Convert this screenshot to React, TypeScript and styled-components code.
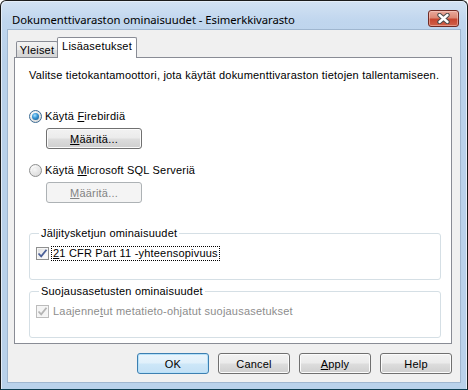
import React from 'react'
import styled, { createGlobalStyle, css } from 'styled-components'

const UI_FONT = `'Liberation Sans', Arial, sans-serif`
const TITLE_FONT = `'Noto Sans', 'Liberation Sans', sans-serif`

const GlobalStyle = createGlobalStyle`
  html, body {
    margin: 0;
    padding: 0;
    background: #ffffff;
  }
  * {
    box-sizing: border-box;
  }
`

export default function App() {
  return (
    <>
      <GlobalStyle />
      <Window>
        <TitleBar>
          <Title>Dokumenttivaraston ominaisuudet - Esimerkkivarasto</Title>
          <CloseButton>
            <svg width='13' height='11' viewBox='0 0 13 11'>
              <path d='M2.5 2 L10.5 9 M10.5 2 L2.5 9' stroke='#4b4b4b' strokeWidth='4.4' strokeLinecap='round' />
              <path d='M2.5 2 L10.5 9 M10.5 2 L2.5 9' stroke='#ffffff' strokeWidth='2.4' strokeLinecap='round' />
            </svg>
          </CloseButton>
        </TitleBar>
        <Client>
          <TabStrip>
            <Tab $width={42}>Yleiset</Tab>
            <Tab $width={80} $active>
              Lisäasetukset
            </Tab>
          </TabStrip>
          <Panel>
            <Intro>Valitse tietokantamoottori, jota käytät dokumenttivaraston tietojen tallentamiseen.</Intro>

            <OptionRow $top={28}>
              <Radio $checked />
              <span>
                Käytä <u>F</u>irebirdiä
              </span>
            </OptionRow>
            <SetupButton>
              <u>M</u>ääritä...
            </SetupButton>

            <OptionRow $top={15}>
              <Radio />
              <span>
                Käytä <u>M</u>icrosoft SQL Serveriä
              </span>
            </OptionRow>
            <SetupButton disabled>
              <u>M</u>ääritä...
            </SetupButton>

            <Group $top={24}>
              <GroupLabel>Jäljitysketjun ominaisuudet</GroupLabel>
              <CheckRow>
                <CheckBox $checked />
                <FocusLabel>
                  <u>2</u>1 CFR Part 11 -yhteensopivuus
                </FocusLabel>
              </CheckRow>
            </Group>

            <Group $top={5}>
              <GroupLabel>Suojausasetusten ominaisuudet</GroupLabel>
              <CheckRow $disabled>
                <CheckBox $checked $disabled />
                <PlainLabel>
                  Laajenne<u>t</u>ut metatieto-ohjatut suojausasetukset
                </PlainLabel>
              </CheckRow>
            </Group>
          </Panel>
          <ButtonBar>
            <DialogButton $default>OK</DialogButton>
            <DialogButton>Cancel</DialogButton>
            <DialogButton>
              <u>A</u>pply
            </DialogButton>
            <DialogButton>Help</DialogButton>
          </ButtonBar>
        </Client>
      </Window>
    </>
  )
}

const CheckBox: React.FC<{ $checked?: boolean; $disabled?: boolean }> = ({ $checked, $disabled }) => (
  <CheckFrame $disabled={$disabled}>
    {$checked && (
      <svg width='11' height='11' viewBox='0 0 11 11'>
        <path
          d='M1.5 5.5 L4.2 8.3 L9.5 1.8'
          fill='none'
          stroke={$disabled ? '#b4b4b4' : '#4a5f97'}
          strokeWidth='1.8'
        />
      </svg>
    )}
  </CheckFrame>
)

const Window = styled.div`
  width: 468px;
  height: 390px;
  display: flex;
  flex-direction: column;
  padding: 0 7px 7px 7px;
  border: 1px solid #1b1b1b;
  border-bottom-color: #0e3f52;
  border-radius: 6px 6px 0 0;
  background: linear-gradient(to bottom, #d3e2f3 0px, #c0d6ee 20px, #b9d1ea 60px, #b9d1ea 100%);
  box-shadow: inset 1px 1px 0 #e4edf8, inset -1px 0 0 #e4edf8;
  font-family: ${UI_FONT};
  font-size: 11px;
  letter-spacing: 0.2px;
  color: #000;
`

const TitleBar = styled.div`
  height: 29px;
  display: flex;
  align-items: center;
  justify-content: space-between;
  padding: 8px 1px 0 4px;
`

const Title = styled.div`
  font-family: ${TITLE_FONT};
  font-size: 11.3px;
  line-height: 14px;
  letter-spacing: -0.05px;
  color: #000;
`

const CloseButton = styled.div`
  width: 31px;
  height: 17px;
  margin-top: -3px;
  display: flex;
  align-items: center;
  justify-content: center;
  border: 1px solid #6f2b25;
  border-radius: 3px;
  background: linear-gradient(to bottom, #e9a99c 0%, #dc8875 45%, #c7452f 55%, #d0624a 100%);
  box-shadow: inset 0 0 0 1px rgba(255, 220, 210, 0.45);
`

const Client = styled.div`
  flex: 1;
  display: flex;
  flex-direction: column;
  padding: 7px 8px 8px 6px;
  background: #f0f0f0;
  box-shadow: 0 0 0 1px #9fb6cf;
`

const TabStrip = styled.div`
  height: 20px;
  display: flex;
  align-items: flex-end;
  padding-left: 2px;
`

const Tab = styled.div<{ $active?: boolean; $width: number }>`
  width: ${(p) => p.$width}px;
  height: 16px;
  padding-top: 2px;
  display: flex;
  align-items: center;
  justify-content: center;
  border: 1px solid #898c95;
  border-bottom: none;
  border-radius: 2px 2px 0 0;
  background: linear-gradient(to bottom, #f3f3f3 0%, #ebebeb 50%, #dedede 50%, #d5d5d5 100%);
  line-height: 13px;

  ${(p) =>
    p.$active &&
    css`
      position: relative;
      z-index: 1;
      height: 21px;
      margin-left: -1px;
      margin-bottom: -1px;
      padding: 0 0 3px 0;
      background: #ffffff;
    `}
`

const Panel = styled.div`
  height: 287px;
  display: flex;
  flex-direction: column;
  align-items: flex-start;
  padding: 11px 8px 0 14px;
  background: #ffffff;
  border: 1px solid #898c95;
`

const Intro = styled.div`
  line-height: 13px;
  white-space: nowrap;
`

const OptionRow = styled.div<{ $top: number }>`
  margin-top: ${(p) => p.$top}px;
  height: 13px;
  display: flex;
  align-items: center;
  gap: 3px;
  line-height: 13px;
`

const Radio = styled.span<{ $checked?: boolean }>`
  position: relative;
  width: 13px;
  height: 13px;
  flex: none;
  border-radius: 50%;
  border: 1px solid ${(p) => (p.$checked ? '#3d6c94' : '#8e8f8f')};
  background: radial-gradient(circle at 35% 30%, #ffffff 0%, #e4e4e4 60%, #cfcfcf 100%);

  &::after {
    content: '';
    position: absolute;
    left: 2px;
    top: 2px;
    width: 7px;
    height: 7px;
    border-radius: 50%;
    background: ${(p) =>
      p.$checked
        ? 'radial-gradient(circle at 40% 35%, #a8e0ff 0%, #3c9ad8 40%, #0f4c7e 100%)'
        : 'radial-gradient(circle at 40% 35%, #f6f6f6 0%, #dcdcdc 100%)'};
  }
`

const buttonFace = css`
  font-family: ${UI_FONT};
  font-size: 11px;
  letter-spacing: 0.2px;
  color: #000;
  padding: 0;
  border: 1px solid #707070;
  border-radius: 3px;
  background: linear-gradient(to bottom, #f2f2f2 0%, #ebebeb 48%, #dddddd 52%, #cfcfcf 100%);
  box-shadow: inset 0 0 0 1px #fbfbfb;

  u {
    text-decoration: underline;
  }

  &:disabled {
    color: #838383;
    border-color: #adb2b5;
    background: #f4f4f4;
    box-shadow: none;
  }
`

const SetupButton = styled.button`
  ${buttonFace};
  width: 96px;
  height: 21px;
  margin: 5px 0 0 17px;
`

const Group = styled.fieldset<{ $top: number }>`
  width: 412px;
  margin: ${(p) => p.$top}px 0 0 0;
  padding: 6px 0 18px 6px;
  min-width: 0;
  border: 1px solid #d5dfe5;
  border-radius: 3px;
`

const GroupLabel = styled.legend`
  margin-left: 3px;
  padding: 0 2px;
  line-height: 13px;
`

const CheckRow = styled.div<{ $disabled?: boolean }>`
  height: 15px;
  display: flex;
  align-items: center;
  gap: 2px;
  color: ${(p) => (p.$disabled ? '#8d8d8d' : '#000')};
`

const CheckFrame = styled.span<{ $disabled?: boolean }>`
  width: 13px;
  height: 13px;
  flex: none;
  display: flex;
  align-items: center;
  justify-content: center;
  border: 1px solid ${(p) => (p.$disabled ? '#bcbcbc' : '#8e8f8f')};
  background: ${(p) =>
    p.$disabled ? '#f4f4f4' : 'linear-gradient(135deg, #dcdcdc 0%, #f4f4f4 60%, #ffffff 100%)'};
  box-shadow: inset 0 0 0 1px #f6f6f6;
`

const FocusLabel = styled.span`
  padding: 0 1px;
  line-height: 13px;
  border: 1px dotted #000;
`

const PlainLabel = styled.span`
  padding: 0 2px;
  line-height: 13px;
`

const ButtonBar = styled.div`
  margin-top: 9px;
  display: flex;
  justify-content: flex-end;
  gap: 9px;
`

const DialogButton = styled.button<{ $default?: boolean }>`
  ${buttonFace};
  width: 72px;
  height: 21px;

  ${(p) =>
    p.$default &&
    css`
      border-color: #3c7fb1;
      background: linear-gradient(to bottom, #eaf5fc 0%, #e0f0fb 48%, #cde7f8 52%, #c3e0f5 100%);
      box-shadow: inset 0 0 0 1px #b6e1f9;
    `}
`
